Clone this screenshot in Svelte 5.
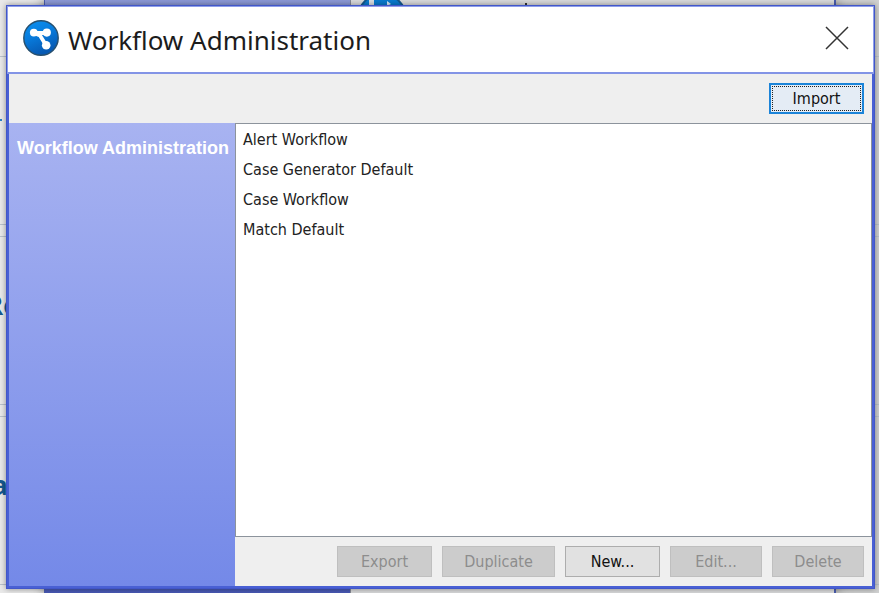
<script>
  const workflows = ['Alert Workflow', 'Case Generator Default', 'Case Workflow', 'Match Default'];
  const actions = [
    { label: 'Export', width: 95, disabled: true },
    { label: 'Duplicate', width: 113, disabled: true },
    { label: 'New...', width: 95, disabled: false },
    { label: 'Edit...', width: 92, disabled: true },
    { label: 'Delete', width: 92, disabled: true }
  ];
  const rules = [56, 224, 236, 404, 416, 584];
</script>

<div class="desktop">
  <div class="backdrop" aria-hidden="true">
    {#each rules as y}
      <i class="rule" style="top: {y}px"></i>
    {/each}
    <i class="dash"></i>
    <span class="heading first">Re</span>
    <span class="heading second">a</span>
    <div class="parent">
      <div class="parent-side"></div>
      <svg class="parent-icon" width="50" height="50" viewBox="0 0 50 50">
        <circle cx="25" cy="25" r="24" fill="#087bd0" stroke="#15598e" stroke-width="2" />
        <path d="M12 0h5v50h-5z" fill="#d8dde3" />
        <path d="M30 8l4 3-4 2z" fill="#d8e8f5" />
      </svg>
      <i class="speck"></i>
    </div>
  </div>

  <section class="dialog" aria-labelledby="title">
    <header>
      <svg width="36" height="36" viewBox="0 0 36 36" aria-hidden="true">
        <defs>
          <linearGradient id="ball" x1="0" y1="0" x2="0.4" y2="1">
            <stop offset="0" stop-color="#0a92f2" />
            <stop offset="0.5" stop-color="#087bdc" />
            <stop offset="1" stop-color="#0759b2" />
          </linearGradient>
        </defs>
        <circle cx="18" cy="18" r="17.2" fill="url(#ball)" stroke="#28506e" stroke-width="1.4" />
        <path d="M11 13H24M11 13l6 2.500 6.500 10.500" stroke="#fff" stroke-width="3.800" stroke-linejoin="round" fill="none" />
        <g fill="#fff">
          <circle cx="10.800" cy="12.600" r="3.900" />
          <circle cx="23.800" cy="12.600" r="4.100" />
          <circle cx="23.200" cy="25.200" r="4.300" />
        </g>
      </svg>
      <h1 id="title">Workflow Administration</h1>
      <button class="close" aria-label="Close">
        <svg width="24" height="24" viewBox="0 0 24 24" aria-hidden="true">
          <path d="M1 1l22 22M23 1L1 23" stroke="#333" stroke-width="1.500" fill="none" />
        </svg>
      </button>
    </header>

    <div class="body">
      <div class="toolbar">
        <button class="action focused">Import</button>
      </div>
      <div class="content">
        <nav><a href="#workflows">Workflow Administration</a></nav>
        <main id="workflows">
          <ul>
            {#each workflows as name}
              <li>{name}</li>
            {/each}
          </ul>
          <footer>
            {#each actions as action}
              <button class="action" disabled={action.disabled} style="width: {action.width}px">{action.label}</button>
            {/each}
          </footer>
        </main>
      </div>
    </div>
  </section>
</div>

<style>
  * {
    box-sizing: border-box;
  }
  .desktop {
    position: relative;
    display: flex;
    min-height: 100vh;
    padding: 5px 4px 4px 6px;
    overflow: hidden;
    background: #e9e9e9;
    font-family: 'DejaVu Sans Condensed', 'DejaVu Sans', sans-serif;
  }
  .backdrop {
    position: absolute;
    inset: 0;
    overflow: hidden;
    background: linear-gradient(90deg, #e9e9e9 0 50%, #d0d1d1 50%);
  }
  .rule {
    position: absolute;
    left: 0;
    right: 0;
    height: 1px;
    background: #bac2cc;
  }
  .dash {
    position: absolute;
    top: 119px;
    left: 0;
    width: 2px;
    height: 2px;
    background: #2a82c4;
  }
  .heading {
    position: absolute;
    color: #15598f;
    font: bold 26px/30px 'Open Sans', sans-serif;
  }
  .first {
    top: 290px;
    left: -14px;
  }
  .second {
    top: 470px;
    left: -8px;
  }
  .parent {
    position: absolute;
    top: 0;
    bottom: 0;
    left: 44px;
    right: 43px;
    border: solid #4b5dae;
    border-width: 0 2px 0 1px;
    background: #d9dadb;
    box-shadow: 0 0 12px #777;
  }
  .parent-side {
    width: 306px;
    height: 100%;
    border-right: 1px solid #858996;
    background: linear-gradient(#8c99d6, #4859b5);
  }
  .parent-icon {
    position: absolute;
    top: -7px;
    left: 312px;
  }
  .speck {
    position: absolute;
    top: 3px;
    left: 480px;
    width: 2px;
    height: 2px;
    background: #333;
  }
  .dialog {
    position: relative;
    display: flex;
    flex: 1;
    flex-direction: column;
    border: 1px solid #4257c9;
    box-shadow: 0 0 6px rgba(0, 0, 0, 0.4);
    background: #fff;
  }
  header {
    display: flex;
    align-items: center;
    height: 68px;
    padding: 0 24px 4px 15px;
    border: 1px solid #8e9ee9;
    border-bottom: 2px solid #8394e6;
  }
  h1 {
    flex: 1;
    margin: 4px 0 0 9px;
    color: #1c1c1c;
    font: 26px/36px 'Noto Sans', 'Open Sans', sans-serif;
  }
  .close {
    display: flex;
    padding: 0;
    border: 0;
    background: none;
  }
  .body {
    display: flex;
    flex: 1;
    flex-direction: column;
    border: 2px solid #4960d4;
    border-top: 0;
    background: #efefef;
  }
  .toolbar {
    display: flex;
    align-items: center;
    justify-content: flex-end;
    height: 49px;
    padding: 0 8px;
  }
  .content {
    display: flex;
    flex: 1;
  }
  nav {
    width: 226px;
    padding: 14px 8px;
    background: linear-gradient(#a8b3f1, #7489e8);
  }
  nav a {
    color: #fff;
    font: bold 18px/22px 'Liberation Sans', sans-serif;
    text-decoration: none;
    white-space: nowrap;
  }
  main {
    display: flex;
    flex: 1;
    flex-direction: column;
  }
  ul {
    flex: 1;
    margin: 0;
    padding: 1px 7px;
    border: 1px solid #8c939c;
    background: #fff;
    list-style: none;
  }
  li {
    color: #222;
    font-size: 16px;
    line-height: 30px;
  }
  footer {
    display: flex;
    align-items: center;
    justify-content: flex-end;
    gap: 10px;
    height: 49px;
    padding: 0 8px;
  }
  .action {
    height: 31px;
    padding: 0;
    border: 1px solid #adadad;
    background: #e1e1e1;
    color: #111;
    font: 16px/20px 'DejaVu Sans Condensed', 'DejaVu Sans', sans-serif;
  }
  .action:disabled {
    border-color: #bfbfbf;
    background: #cccccc;
    color: #8d8d8d;
  }
  .focused {
    width: 95px;
    border: 2px solid #1c84d8;
    outline: 1px dotted #222;
    outline-offset: -4px;
    background: #e4ecf5;
  }
</style>
